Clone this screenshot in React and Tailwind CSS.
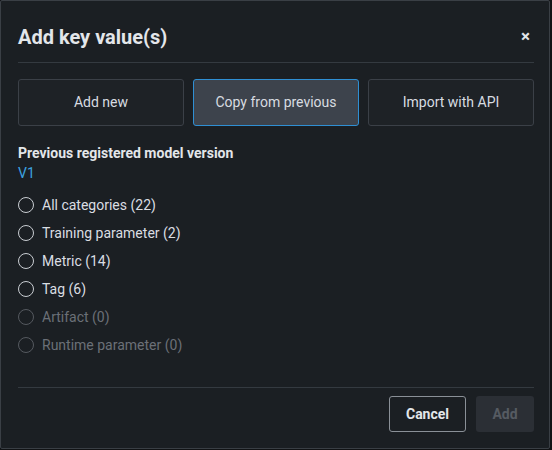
import React from "react";

const items = [
  { label: "All categories (22)", disabled: false },
  { label: "Training parameter (2)", disabled: false },
  { label: "Metric (14)", disabled: false },
  { label: "Tag (6)", disabled: false },
  { label: "Artifact (0)", disabled: true },
  { label: "Runtime parameter (0)", disabled: true },
];

export default function App() {
  return (
    <div className="w-[552px] h-[450px] bg-[#111315] font-['Roboto',sans-serif]">
      <div className="w-[550px] h-[449px] border border-[#3a3f45] bg-[#1b1f23] flex flex-col rounded-[2px]">
        <div className="flex items-center justify-between pl-[17px] pr-[15px] pt-[22px] pb-[12px] h-[61px]">
          <h1 className="text-[20px] font-bold text-[#e3e6ea] leading-[28px]">Add key value(s)</h1>
          <span className="text-[#e3e6ea] text-[17px] font-bold leading-none mr-[4px]">×</span>
        </div>
        <div className="ml-[17px] mr-[15px] border-t border-[#343a40]" />
        <div className="grid grid-cols-3 gap-[9px] pl-[17px] pr-[15px] mt-[16px]">
          <div className="h-[47px] rounded-[3px] border border-[#3b4047] bg-[#1e2226] flex items-center justify-center text-[14px] text-[#d8dce1]">Add new</div>
          <div className="h-[47px] rounded-[3px] border border-[#2f8fd3] bg-[#3d434c] flex items-center justify-center text-[14px] text-[#d8dce1]">Copy from previous</div>
          <div className="h-[47px] rounded-[3px] border border-[#3b4047] bg-[#1e2226] flex items-center justify-center text-[14px] text-[#d8dce1]">Import with API</div>
        </div>
        <div className="px-[17px] mt-[17px]">
          <div className="text-[14px] font-bold text-[#e3e6ea] leading-[20px]">Previous registered model version</div>
          <div className="text-[14px] text-[#3ba3e0] leading-[20px]">V1</div>
          <div className="flex flex-col mt-[8px]">
            {items.map((it) => (
              <div key={it.label} className="flex items-center gap-[8px] h-[28px]">
                <span className={`w-[16px] h-[16px] rounded-full border ${it.disabled ? "border-[#55595f]" : "border-[#c9cdd2]"}`} />
                <span className={`text-[14px] ${it.disabled ? "text-[#6b7077]" : "text-[#dadde2]"}`}>{it.label}</span>
              </div>
            ))}
          </div>
        </div>
        <div className="flex-1" />
        <div className="ml-[17px] mr-[15px] border-t border-[#343a40]" />
        <div className="flex justify-end gap-[10px] pl-[16px] pr-[15px] pt-[8px] pb-[16px]">
          <div className="w-[77px] h-[36px] rounded-[3px] border border-[#8a9097] flex items-center justify-center text-[14px] font-bold text-[#e3e6ea]">Cancel</div>
          <div className="w-[58px] h-[36px] rounded-[3px] bg-[#2b2f35] flex items-center justify-center text-[14px] font-bold text-[#565b62]">Add</div>
        </div>
      </div>
    </div>
  );
}
